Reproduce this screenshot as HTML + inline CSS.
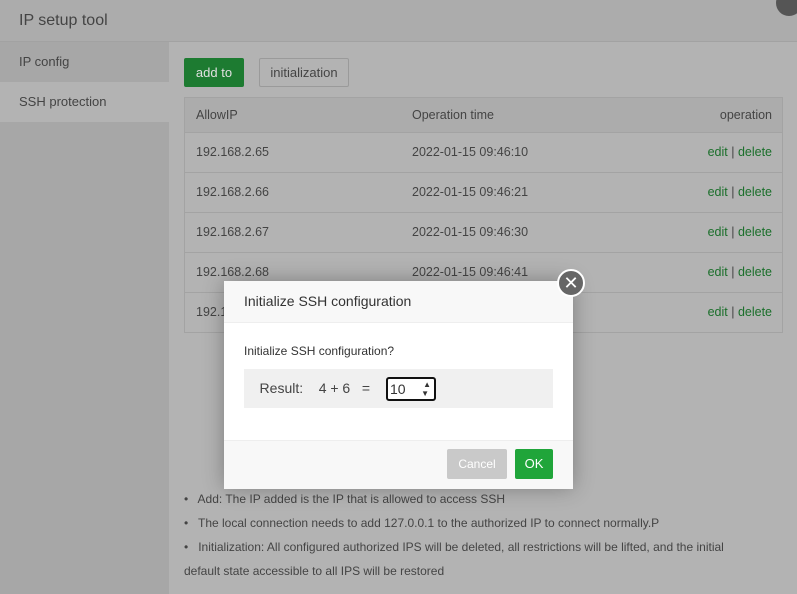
<!DOCTYPE html><html><head><style>
body{margin:0;width:797px;height:594px;overflow:hidden;background:#b3b3b3;font-family:"Liberation Sans",sans-serif;position:relative;color:#444}
.a{position:absolute}
.title{left:0;top:0;width:797px;height:41px;background:#acacac;border-bottom:1px solid #a2a2a2;font-size:16px;line-height:41px;text-indent:19px}
.side{left:0;top:42px;width:169px;height:552px;background:#a7a7a7}
.si{left:0;width:169px;height:40px;line-height:40px;text-indent:19px;font-size:13px}
.btn{font-size:13px;height:29px;line-height:29px;text-align:center;border-radius:2px}
.tb{left:184px;top:97px;width:597px;border:1px solid #a3a3a3;border-bottom:none;font-size:12.5px}
.r{position:relative;height:39px;line-height:39px;border-bottom:1px solid #a3a3a3}
.r span{position:absolute}
.c1{left:11px}.c2{left:227px}.c3{right:10px}
.g{color:#1b6f2b}
</style></head><body>
<div class="a title">IP setup tool</div>
<div class="a" style="left:776px;top:-10px;width:26px;height:26px;border-radius:50%;background:#555"></div>
<div class="a side"></div>
<div class="a si" style="top:42px;background:#a7a7a7">IP config</div>
<div class="a si" style="top:82px;background:#b3b3b3">SSH protection</div>
<div class="a btn" style="left:184px;top:58px;width:60px;background:#1d7b31;color:#e0e0e0">add to</div>
<div class="a btn" style="left:259px;top:58px;width:88px;border:1px solid #9a9a9a;height:27px;line-height:27px">initialization</div>
<div class="a tb">
<div class="r" style="height:34px;line-height:34px;background:#acacac"><span class="c1">AllowIP</span><span class="c2">Operation time</span><span class="c3">operation</span></div>
<div class="r"><span class="c1">192.168.2.65</span><span class="c2">2022-01-15 09:46:10</span><span class="c3"><span class="g" style="position:static">edit</span> | <span class="g" style="position:static">delete</span></span></div>
<div class="r"><span class="c1">192.168.2.66</span><span class="c2">2022-01-15 09:46:21</span><span class="c3"><span class="g" style="position:static">edit</span> | <span class="g" style="position:static">delete</span></span></div>
<div class="r"><span class="c1">192.168.2.67</span><span class="c2">2022-01-15 09:46:30</span><span class="c3"><span class="g" style="position:static">edit</span> | <span class="g" style="position:static">delete</span></span></div>
<div class="r"><span class="c1">192.168.2.68</span><span class="c2">2022-01-15 09:46:41</span><span class="c3"><span class="g" style="position:static">edit</span> | <span class="g" style="position:static">delete</span></span></div>
<div class="r"><span class="c1">192.168.2.69</span><span class="c2">2022-01-15 09:46:50</span><span class="c3"><span class="g" style="position:static">edit</span> | <span class="g" style="position:static">delete</span></span></div>
</div>
<div class="a" style="left:184px;top:487px;font-size:12px;line-height:24px;width:600px">
<div>•&nbsp;&nbsp; Add: The IP added is the IP that is allowed to access SSH</div>
<div>•&nbsp;&nbsp; The local connection needs to add 127.0.0.1 to the authorized IP to connect normally.P</div>
<div>•&nbsp;&nbsp; Initialization: All configured authorized IPS will be deleted, all restrictions will be lifted, and the initial<br>default state accessible to all IPS will be restored</div>
</div>
<div class="a" style="left:224px;top:281px;width:349px;height:207px;background:#fff;box-shadow:0 0 20px rgba(0,0,0,.3)">
<div style="height:41px;background:#f8f8f8;border-bottom:1px solid #eee;line-height:41px;padding-left:20px;font-size:14px;color:#333">Initialize SSH configuration</div>
<div class="a" style="left:20px;top:63px;font-size:12px;color:#333">Initialize SSH configuration?</div>
<div class="a" style="left:20px;top:88px;width:309px;height:39px;background:#f0f0f0;font-size:14px;color:#444;line-height:39px">&nbsp;&nbsp;&nbsp;&nbsp;Result:&nbsp;&nbsp;&nbsp;&nbsp;4 + 6&nbsp;&nbsp; =</div>
<div class="a" style="left:162px;top:96px;width:46px;height:20px;border:2px solid #111;border-radius:3px;background:#fff;font-size:14px;line-height:20px;text-indent:2px;color:#333">10<span class="a" style="right:3px;top:1px;font-size:8px;line-height:9px">▲<br>▼</span></div>
<div class="a" style="left:0;top:159px;width:349px;height:48px;background:#f8f8f8;border-top:1px solid #eee"></div>
<div class="a btn" style="left:223px;top:168px;width:60px;height:30px;line-height:30px;background:#c9c9c9;color:#fff;font-size:12px">Cancel</div>
<div class="a btn" style="left:291px;top:168px;width:38px;height:30px;line-height:30px;background:#20a53a;color:#fff">OK</div>
</div>
<div class="a" style="left:557px;top:269px;width:24px;height:24px;border-radius:50%;background:#666;border:2px solid #fff;color:#fff;text-align:center;line-height:24px;font-size:18px">✕</div>
</body></html>
